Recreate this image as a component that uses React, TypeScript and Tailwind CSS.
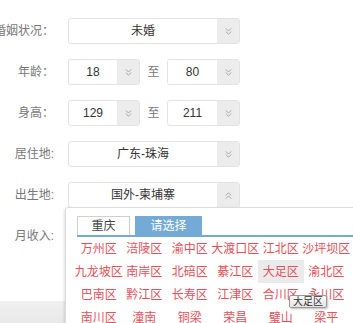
import React from "react";

const FONT = { fontFamily: '"Liberation Sans", "Noto Sans CJK SC", sans-serif' };

function Chevrons({ up }: { up?: boolean }) {
  return (
    <svg width="9" height="9" viewBox="0 0 10 10" className={up ? "rotate-180" : ""}>
      <path d="M2 1.5 L5 4.5 L8 1.5 M2 5 L5 8 L8 5" fill="none" stroke="#a0a0a0" strokeWidth="1" />
    </svg>
  );
}

function Select({ value, w, up }: { value: string; w: string; up?: boolean }) {
  return (
    <div className={`flex h-[26px] ${w} border border-[#e3e3e3] rounded-[3px] overflow-hidden bg-white`}>
      <div className="flex-1 flex items-center justify-center text-[12px] text-[#333]">{value}</div>
      <div className="w-[22px] bg-[#ececec] flex items-center justify-center">
        <Chevrons up={up} />
      </div>
    </div>
  );
}

function Row({ label, children }: { label: string; children?: React.ReactNode }) {
  return (
    <div className="flex items-center h-[26px]">
      <div className="w-[54px] flex justify-end text-[12px] text-[#777] whitespace-nowrap shrink-0">
        <span>{label}</span>
      </div>
      <div className="ml-[14px] flex items-center">{children}</div>
    </div>
  );
}

const items = [
  "万州区", "涪陵区", "渝中区", "大渡口区", "江北区", "沙坪坝区",
  "九龙坡区", "南岸区", "北碚区", "綦江区", "大足区", "渝北区",
  "巴南区", "黔江区", "长寿区", "江津区", "合川区", "永川区",
  "南川区", "潼南", "铜梁", "荣昌", "璧山", "梁平",
];

export default function App() {
  return (
    <div className="relative w-[353px] h-[323px] overflow-hidden bg-white" style={FONT}>
      <div className="flex flex-col gap-[15px] pt-[18px]">
        <Row label="婚姻状况：">
          <Select value="未婚" w="w-[172px]" />
        </Row>
        <Row label="年龄：">
          <Select value="18" w="w-[72px]" />
          <div className="w-[27px] text-center text-[12px] text-[#777]">至</div>
          <Select value="80" w="w-[73px]" />
        </Row>
        <Row label="身高：">
          <Select value="129" w="w-[72px]" />
          <div className="w-[27px] text-center text-[12px] text-[#777]">至</div>
          <Select value="211" w="w-[73px]" />
        </Row>
        <Row label="居住地:">
          <Select value="广东-珠海" w="w-[172px]" />
        </Row>
        <Row label="出生地:">
          <Select value="国外-柬埔寨" w="w-[172px]" up />
        </Row>
        <Row label="月收入:">
          <Select value="" w="w-[172px]" />
        </Row>
      </div>
      <div className="mt-[52px] h-[30px] bg-gradient-to-b from-[#f0f0f0] to-[#e6e6e6]" />

      {/* dropdown panel */}
      <div className="absolute left-[65px] top-[207px] w-[300px] h-[130px] bg-white border border-[#dcdcdc] rounded-[3px] shadow-[-1px_1px_3px_rgba(0,0,0,0.12)] pl-[11px] pt-[8px]">
        <div className="flex items-end gap-[5px] border-b-2 border-[#74aad6]">
          <div className="w-[53px] h-[19px] border border-[#cfcfcf] border-b-0 bg-white flex items-center justify-center text-[12px] text-[#444]">
            重庆
          </div>
          <div className="w-[67px] h-[19px] bg-[#74aad6] flex items-center justify-center text-[12px] text-white">
            请选择
          </div>
        </div>
        <div className="grid grid-cols-[repeat(6,45.5px)] -ml-[1px]">
          {items.map((it) => (
            <div
              key={it}
              className={`h-[23px] flex items-center justify-center text-[12px] text-[#e5505a] whitespace-nowrap ${
                it === "大足区" ? "bg-[#ebebeb]" : ""
              }`}
            >
              {it}
            </div>
          ))}
        </div>
      </div>

      {/* tooltip */}
      <div className="absolute left-[289px] top-[295px] h-[13px] px-[3px] flex items-center border border-[#9a9a9a] rounded-[2px] bg-gradient-to-b from-[#fafafa] to-[#e4e4e4] shadow-[1px_1px_2px_rgba(0,0,0,0.25)] text-[10px] leading-none text-[#333]">
        大足区
      </div>
    </div>
  );
}
